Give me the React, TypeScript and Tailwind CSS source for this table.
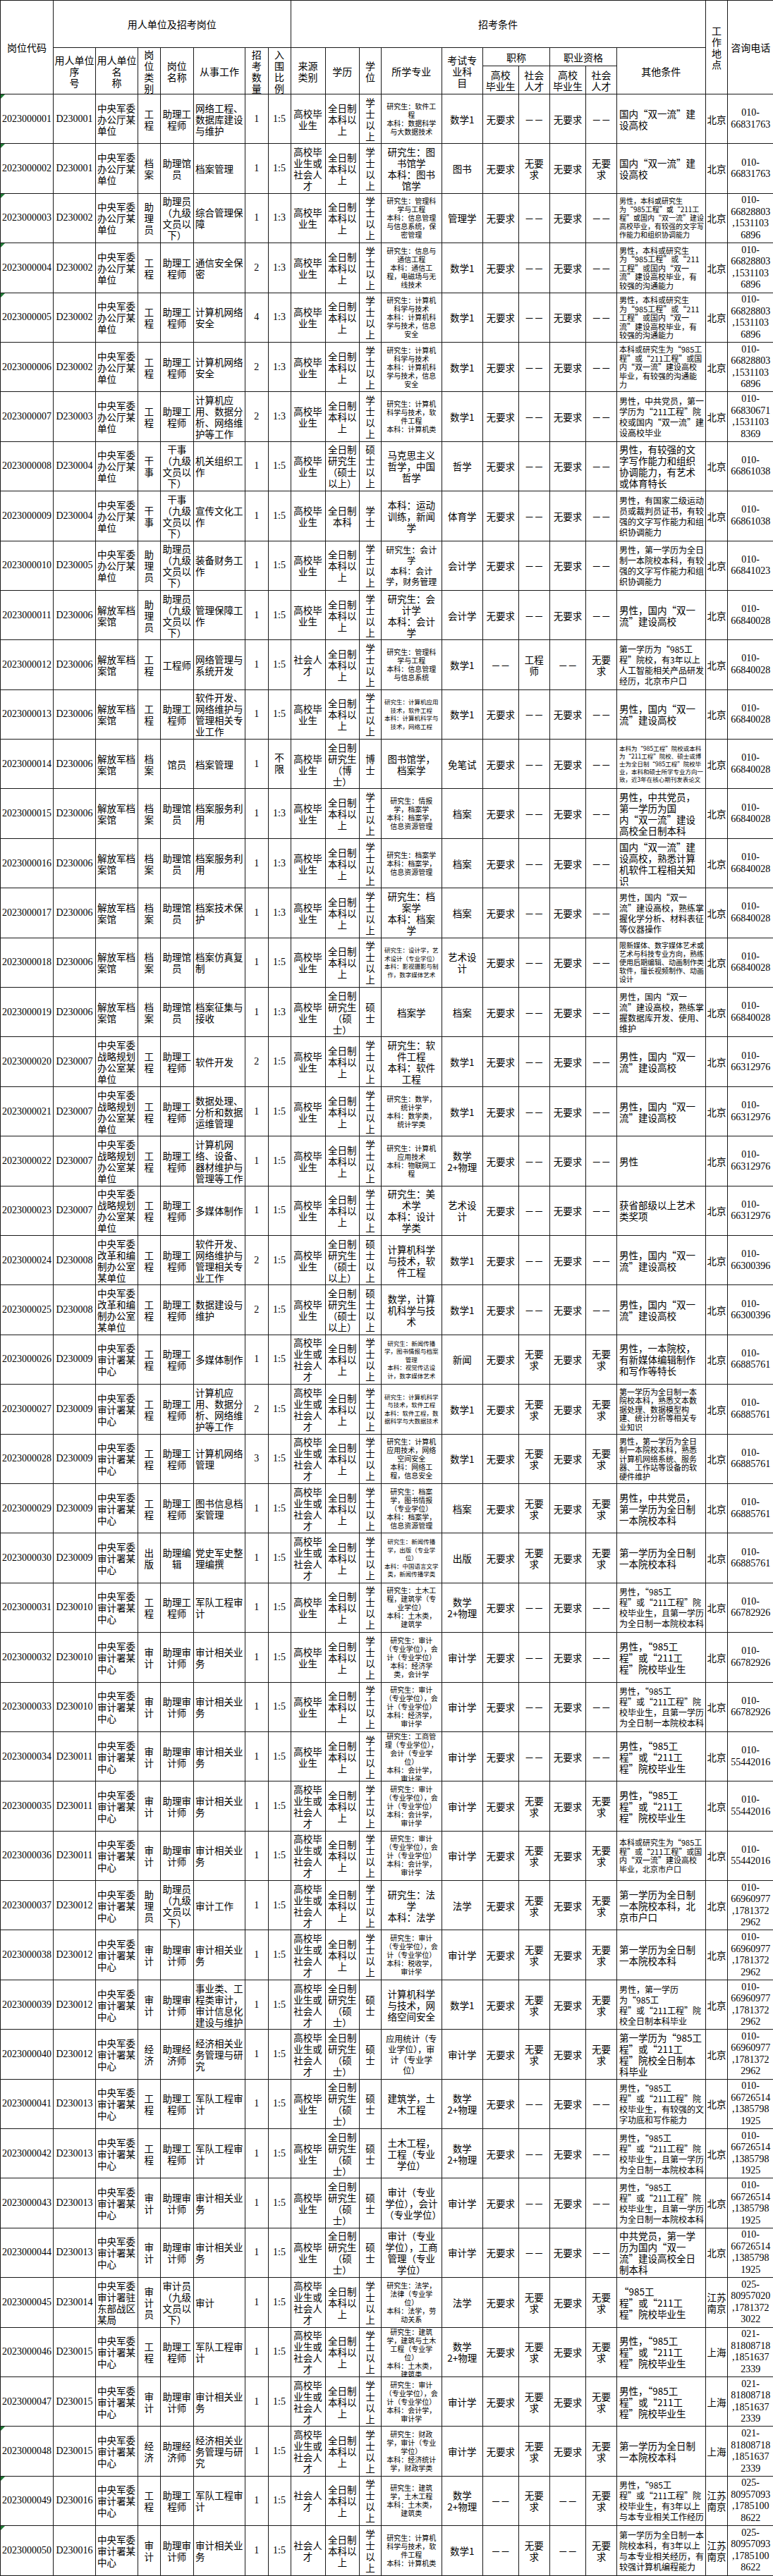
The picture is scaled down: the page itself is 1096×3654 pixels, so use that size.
import React from 'react';

type Size = 'L' | 'M' | 'S' | 'T' | 'X' | 'Z';

const sizeCls: Record<Size, string> = {
  L: 'text-[13.5px] leading-[16px]',
  M: 'text-[12px] leading-[15px]',
  S: 'text-[11px] leading-[12.5px]',
  T: 'text-[10px] leading-[12px]',
  X: 'text-[8.5px] leading-[11.5px]',
  Z: 'text-[8.5px] leading-[11px]',
};

const NUM = "font-['Liberation_Serif','Noto_Sans_CJK_SC',serif]";
const TD = 'border border-[#1a1a1a] p-0 align-middle';

// units
const U1 = '中央军委办公厅某单位';
const U2 = '解放军档案馆';
const U3 = '中央军委战略规划办公室某单位';
const U4 = '中央军委改革和编制办公室某单位';
const U5 = '中央军委审计署某中心';
const U6 = '中央军委审计署驻东部战区某局';

// phones
const P1 = '010-\n66831763';
const P2 = '010-\n66828803\n,1531103\n6896';
const P3 = '010-\n66830671\n,1531103\n8369';
const P4 = '010-\n66861038';
const P5 = '010-\n66841023';
const P6 = '010-\n66840028';
const P7 = '010-\n66312976';
const P8 = '010-\n66300396';
const P9 = '010-\n66885761';
const P10 = '010-\n66782926';
const P11 = '010-\n55442016';
const P12 = '010-\n66960977\n,1781372\n2962';
const P13 = '010-\n66726514\n,1385798\n1925';
const P14 = '025-\n80957020\n,1781372\n3022';
const P15 = '021-\n81808718\n,1851637\n2339';
const P16 = '025-\n80957093\n,1785100\n8622';

const G = '高校毕业生';
const GS = '高校毕业生或社会人才';
const SR = '社会人才';
const B = '全日制本科以上';
const Y = '全日制研究生（硕士以上）';
const YS = '全日制研究生（硕士）';
const XS = '学士以上';
const SS = '硕士以上';
const ENG = '助理工程师';
const AUD = '助理审计师';
const AUDW = '审计相关业务';
const ZLY = '助理员（九级文员以下）';

const D = '－－';
const N = '无要求';
const conds: Record<string, string[]> = {
  g: [N, D, N, D],
  gs: [N, N, N, N],
  sr: [D, N, D, N],
  e: [D, '工程师', D, N],
};

type Row = {
  seq: string;
  unit: string;
  type: string;
  post: string;
  work: string;
  num: string;
  ratio: string;
  source: string;
  edu: string;
  degree: string;
  major: string;
  ms: Size;
  exam: string;
  c: string;
  other: string;
  os: Size;
  place: string;
  phone: string;
  mark?: boolean;
};

function r(
  seq: string, unit: string, type: string, post: string, work: string, num: string, ratio: string,
  source: string, edu: string, degree: string, major: string, ms: Size, exam: string, c: string,
  other: string, os: Size, place: string, phone: string, mark = false,
): Row {
  return { seq, unit, type, post, work, num, ratio, source, edu, degree, major, ms, exam, c, other, os, place, phone, mark };
}

const AUD_MAJOR = '研究生：审计（专业学位），会计（专业学位）\n本科：会计学，审计学';
const M985 = '男性，“985工程”或“211工程”院校毕业生';
const M985B = '男性，“985工程”或“211工程”院校毕业生，且第一学历为全日制一本院校本科';
const SYL = '男性，国内“双一流”建设高校';

const rows: Row[] = [
  r('D230001', U1, '工程', ENG, '网络工程、数据库建设与维护', '1', '1:5', G, B, XS, '研究生：软件工程\n本科：数据科学与大数据技术', 'T', '数学1', 'g', '国内“双一流”建设高校', 'L', '北京', P1, true),
  r('D230001', U1, '档案', '助理馆员', '档案管理', '1', '1:5', GS, B, XS, '研究生：图书馆学\n本科：图书馆学', 'L', '图书', 'gs', '国内“双一流”建设高校', 'L', '北京', P1, true),
  r('D230002', U1, '助理员', ZLY, '综合管理保障', '1', '1:3', G, B, XS, '研究生：管理科学与工程\n本科：信息管理与信息系统，保密管理', 'T', '管理学', 'g', '男性，本科或研究生为“985工程”或“211工程”或国内“双一流”建设高校毕业，有较强的文字写作能力和组织协调能力', 'T', '北京', P2, true),
  r('D230002', U1, '工程', ENG, '通信安全保密', '2', '1:3', G, B, XS, '研究生：信息与通信工程\n本科：通信工程，电磁场与无线技术', 'T', '数学1', 'g', '男性，本科或研究生为“985工程”或“211工程”或国内“双一流”建设高校毕业，有较强的沟通能力', 'S', '北京', P2, true),
  r('D230002', U1, '工程', ENG, '计算机网络安全', '4', '1:3', G, B, XS, '研究生：计算机科学与技术\n本科：计算机科学与技术，信息安全', 'T', '数学1', 'g', '男性，本科或研究生为“985工程”或“211工程”或国内“双一流”建设高校毕业，有较强的沟通能力', 'S', '北京', P2, true),
  r('D230002', U1, '工程', ENG, '计算机网络安全', '2', '1:3', G, B, XS, '研究生：计算机科学与技术\n本科：计算机科学与技术，信息安全', 'T', '数学1', 'g', '本科或研究生为“985工程”或“211工程”或国内“双一流”建设高校毕业，有较强的沟通能力', 'S', '北京', P2),
  r('D230003', U1, '工程', ENG, '计算机应用、数据分析、网络维护等工作', '2', '1:3', G, B, XS, '研究生：计算机科学与技术，软件工程\n本科：计算机类', 'T', '数学1', 'g', '男性，中共党员，第一学历为“211工程”院校或国内“双一流”建设高校毕业', 'M', '北京', P3),
  r('D230004', U1, '干事', '干事（九级文员以下）', '机关组织工作', '1', '1:5', G, Y, SS, '马克思主义哲学，中国哲学', 'L', '哲学', 'g', '男性，有较强的文字写作能力和组织协调能力，有艺术或体育特长', 'L', '北京', P4),
  r('D230004', U1, '干事', '干事（九级文员以下）', '宣传文化工作', '1', '1:5', G, '全日制本科', '学士', '本科：运动训练，新闻学', 'L', '体育学', 'g', '男性，有国家二级运动员或裁判员证书，有较强的文字写作能力和组织协调能力', 'M', '北京', P4),
  r('D230005', U1, '助理员', ZLY, '装备财务工作', '1', '1:5', G, B, XS, '研究生：会计学\n本科：会计学，财务管理', 'M', '会计学', 'g', '男性，第一学历为全日制一本院校本科，有较强的文字写作能力和组织协调能力', 'M', '北京', P5),
  r('D230006', U2, '助理员', ZLY, '管理保障工作', '1', '1:5', G, B, XS, '研究生：会计学\n本科：会计学', 'L', '会计学', 'g', SYL, 'L', '北京', P6),
  r('D230006', U2, '工程', '工程师', '网络管理与系统开发', '1', '1:5', SR, B, XS, '研究生：管理科学与工程\n本科：信息管理与信息系统', 'T', '数学1', 'e', '第一学历为“985工程”院校，有3年以上人工智能相关产品研发经历，北京市户口', 'M', '北京', P6),
  r('D230006', U2, '工程', ENG, '软件开发、网络维护与管理相关专业工作', '1', '1:5', G, B, XS, '研究生：计算机应用技术，软件工程\n本科：计算机科学与技术，网络工程', 'X', '数学1', 'g', SYL, 'L', '北京', P6),
  r('D230006', U2, '档案', '馆员', '档案管理', '1', '不限', G, '全日制研究生（博士）', '博士', '图书馆学，档案学', 'L', '免笔试', 'g', '本科为“985工程”院校或本科为“211工程”院校、硕士或博士为全日制“985工程”院校毕业，本科和硕士所学专业方向一致，近3年在核心期刊发表论文', 'Z', '北京', P6),
  r('D230006', U2, '档案', '助理馆员', '档案服务利用', '1', '1:3', G, B, XS, '研究生：情报学，档案学\n本科：档案学，信息资源管理', 'T', '档案', 'g', '男性，中共党员，第一学历为国内“双一流”建设高校全日制本科', 'L', '北京', P6),
  r('D230006', U2, '档案', '助理馆员', '档案服务利用', '1', '1:3', G, B, XS, '研究生：档案学\n本科：档案学，信息资源管理', 'T', '档案', 'g', '国内“双一流”建设高校，熟悉计算机软件工程相关知识', 'L', '北京', P6),
  r('D230006', U2, '档案', '助理馆员', '档案技术保护', '1', '1:3', G, B, XS, '研究生：档案学\n本科：档案学', 'L', '档案', 'g', '男性，国内“双一流”建设高校，熟练掌握化学分析、材料表征等仪器操作', 'M', '北京', P6),
  r('D230006', U2, '档案', '助理馆员', '档案仿真复制', '1', '1:5', G, B, XS, '研究生：设计学，艺术设计（专业学位）\n本科：影视摄影与制作，数字媒体艺术', 'X', '艺术设计', 'g', '限新媒体、数字媒体艺术或艺术与科技专业方向，熟练使用后期编辑、动画制作类软件，擅长视频制作、动画设计', 'T', '北京', P6),
  r('D230006', U2, '档案', '助理馆员', '档案征集与接收', '1', '1:3', G, YS, '硕士', '档案学', 'L', '档案', 'g', '男性，国内“双一流”建设高校，熟练掌握数据库开发、使用、维护', 'M', '北京', P6),
  r('D230007', U3, '工程', ENG, '软件开发', '2', '1:5', G, B, XS, '研究生：软件工程\n本科：软件工程', 'L', '数学1', 'g', SYL, 'L', '北京', P7),
  r('D230007', U3, '工程', ENG, '数据处理、分析和数据运维管理', '1', '1:5', G, B, XS, '研究生：数学，统计学\n本科：数学类，统计学类', 'T', '数学1', 'g', SYL, 'L', '北京', P7),
  r('D230007', U3, '工程', ENG, '计算机网络、设备、器材维护与管理等工作', '1', '1:5', G, B, XS, '研究生：计算机应用技术\n本科：物联网工程', 'T', '数学2+物理', 'g', '男性', 'L', '北京', P7),
  r('D230007', U3, '工程', ENG, '多媒体制作', '1', '1:5', G, B, XS, '研究生：美术学\n本科：设计学类', 'L', '艺术设计', 'g', '获省部级以上艺术类奖项', 'L', '北京', P7),
  r('D230008', U4, '工程', ENG, '软件开发、网络维护与管理相关专业工作', '2', '1:5', G, Y, SS, '计算机科学与技术，软件工程', 'L', '数学1', 'g', SYL, 'L', '北京', P8),
  r('D230008', U4, '工程', ENG, '数据建设与维护', '2', '1:5', G, Y, SS, '数学，计算机科学与技术', 'L', '数学1', 'g', SYL, 'L', '北京', P8),
  r('D230009', U5, '工程', ENG, '多媒体制作', '1', '1:5', GS, B, XS, '研究生：新闻传播学，图书情报与档案管理\n本科：视觉传达设计，数字媒体艺术', 'X', '新闻', 'gs', '男性，一本院校，有新媒体编辑制作和写作等特长', 'L', '北京', P9),
  r('D230009', U5, '工程', ENG, '计算机应用、数据分析、网络维护等工作', '2', '1:5', GS, B, XS, '研究生：计算机科学与技术，软件工程\n本科：软件工程，数据科学与大数据技术', 'X', '数学1', 'gs', '第一学历为全日制一本院校本科，熟悉文本数据处理、数据模型构建、统计分析等相关专业知识', 'S', '北京', P9),
  r('D230009', U5, '工程', ENG, '计算机网络管理', '3', '1:5', GS, B, XS, '研究生：计算机应用技术，网络空间安全\n本科：网络工程，信息安全', 'T', '数学1', 'gs', '男性，第一学历为全日制一本院校本科，熟悉计算机网络系统、服务器、工作站等设备的软硬件维护', 'S', '北京', P9),
  r('D230009', U5, '工程', ENG, '图书信息档案管理', '1', '1:5', GS, B, XS, '研究生：档案学，图书情报（专业学位）\n本科：档案学，信息资源管理', 'T', '档案', 'gs', '男性，中共党员，第一学历为全日制一本院校本科', 'L', '北京', P9),
  r('D230009', U5, '出版', '助理编辑', '党史军史整理编撰', '1', '1:5', GS, B, XS, '研究生：新闻传播学，出版（专业学位）\n本科：中国语言文学类，新闻传播学类', 'X', '出版', 'gs', '第一学历为全日制一本院校本科', 'L', '北京', P9),
  r('D230010', U5, '工程', ENG, '军队工程审计', '1', '1:5', G, B, XS, '研究生：土木工程，建筑学（专业学位）\n本科：土木类，建筑学', 'T', '数学2+物理', 'g', M985B, 'M', '北京', P10),
  r('D230010', U5, '审计', AUD, AUDW, '1', '1:5', G, B, XS, '研究生：审计（专业学位），会计（专业学位）\n本科：经济学类，会计学', 'T', '审计学', 'g', M985, 'L', '北京', P10),
  r('D230010', U5, '审计', AUD, AUDW, '1', '1:5', G, B, XS, '研究生：审计（专业学位），会计（专业学位）\n本科：经济学，审计学', 'T', '审计学', 'g', M985B, 'M', '北京', P10),
  r('D230011', U5, '审计', AUD, AUDW, '1', '1:5', G, B, XS, '研究生：工商管理（专业学位），会计（专业学位）\n本科：会计学，审计学', 'T', '审计学', 'g', M985, 'L', '北京', P11),
  r('D230011', U5, '审计', AUD, AUDW, '1', '1:5', GS, B, XS, AUD_MAJOR, 'T', '审计学', 'gs', M985, 'L', '北京', P11),
  r('D230011', U5, '审计', AUD, AUDW, '1', '1:5', GS, B, XS, AUD_MAJOR, 'T', '审计学', 'gs', '本科或研究生为“985工程”或“211工程”或国内“双一流”建设高校毕业，北京市户口', 'S', '北京', P11),
  r('D230012', U5, '助理员', ZLY, '审计工作', '1', '1:5', GS, B, XS, '研究生：法学\n本科：法学', 'L', '法学', 'gs', '第一学历为全日制一本院校本科，北京市户口', 'L', '北京', P12),
  r('D230012', U5, '审计', AUD, AUDW, '1', '1:5', GS, B, XS, '研究生：审计（专业学位），会计（专业学位）\n本科：税收学，审计学', 'T', '审计学', 'gs', '第一学历为全日制一本院校本科', 'L', '北京', P12),
  r('D230012', U5, '审计', AUD, '事业类、工程类审计，审计信息化建设与维护', '1', '1:5', GS, YS, '硕士', '计算机科学与技术，网络空间安全', 'L', '数学1', 'gs', '男性，第一学历为“985工程”或“211工程”院校全日制本科毕业', 'M', '北京', P12),
  r('D230012', U5, '经济', '助理经济师', '经济相关业务管理与研究', '1', '1:5', GS, YS, '硕士', '应用统计（专业学位），审计（专业学位）', 'M', '审计学', 'gs', '第一学历为“985工程”或“211工程”院校全日制本科毕业', 'L', '北京', P12),
  r('D230013', U5, '工程', ENG, '军队工程审计', '1', '1:5', G, YS, '硕士', '建筑学，土木工程', 'L', '数学2+物理', 'g', '男性，“985工程”或“211工程”院校毕业生，有较强的文字功底和写作能力', 'M', '北京', P13),
  r('D230013', U5, '工程', ENG, '军队工程审计', '1', '1:5', G, YS, '硕士', '土木工程，工程（专业学位）', 'L', '数学2+物理', 'g', M985B, 'M', '北京', P13),
  r('D230013', U5, '审计', AUD, AUDW, '1', '1:5', G, YS, '硕士', '审计（专业学位），会计（专业学位）', 'L', '审计学', 'g', M985B, 'M', '北京', P13),
  r('D230013', U5, '审计', AUD, AUDW, '1', '1:5', G, YS, '硕士', '审计（专业学位），工商管理（专业学位）', 'L', '审计学', 'g', '中共党员，第一学历为国内“双一流”建设高校全日制本科', 'L', '北京', P13),
  r('D230014', U6, '审计员', '审计员（九级文员以下）', '审计', '1', '1:5', GS, B, XS, '研究生：法学，法律（专业学位）\n本科：法学，劳动关系', 'T', '法学', 'gs', '“985工程”或“211工程”院校毕业生', 'L', '江苏\n南京', P14),
  r('D230015', U5, '工程', ENG, '军队工程审计', '1', '1:5', GS, B, XS, '研究生：建筑学，建筑与土木工程（专业学位）\n本科：土木类，建筑类', 'T', '数学2+物理', 'gs', M985, 'L', '上海', P15),
  r('D230015', U5, '审计', AUD, AUDW, '1', '1:5', GS, B, XS, AUD_MAJOR, 'T', '审计学', 'gs', M985, 'L', '上海', P15),
  r('D230015', U5, '经济', '助理经济师', '经济相关业务管理与研究', '1', '1:5', GS, B, XS, '研究生：财政学，审计（专业学位）\n本科：经济统计学，财政学类', 'T', '审计学', 'gs', '第一学历为全日制一本院校本科', 'L', '上海', P15, true),
  r('D230016', U5, '工程', ENG, '军队工程审计', '1', '1:5', SR, B, XS, '研究生：建筑学，土木工程\n本科：土木类，建筑类', 'T', '数学2+物理', 'sr', '男性，“985工程”或“211工程”院校毕业生，有3年以上与本专业相关工作经历', 'M', '江苏\n南京', P16, true),
  r('D230016', U5, '审计', AUD, AUDW, '1', '1:5', SR, B, XS, '研究生：计算机科学与技术，软件工程\n本科：计算机类', 'T', '数学1', 'sr', '第一学历为全日制一本院校本科，有3年以上与本专业相关经历，有较强计算机编程能力', 'M', '江苏\n南京', P16, true),
];

function Box({ h, className = '', children }: { h: string; className?: string; children: React.ReactNode }) {
  return (
    <div className={`relative flex flex-col overflow-hidden ${h} ${className}`}>
      <div className="my-auto whitespace-pre-line">{children}</div>
    </div>
  );
}

const widths = [
  'w-[75px]', 'w-[60px]', 'w-[60px]', 'w-[31.5px]', 'w-[47.5px]', 'w-[73px]', 'w-[32.5px]', 'w-[32px]',
  'w-[49px]', 'w-[48.5px]', 'w-[31px]', 'w-[85.5px]', 'w-[58.5px]', 'w-[50.5px]', 'w-[44.5px]',
  'w-[51px]', 'w-[44px]', 'w-[125.5px]', 'w-[31.5px]', 'w-[65px]',
];

const RH = 'h-[69.4px]';
const L = sizeCls.L;

function DataRow({ row, i }: { row: Row; i: number }) {
  const code = `20230000${String(i + 1).padStart(2, '0')}`;
  const [t1, t2, q1, q2] = conds[row.c];
  const center = `text-center ${L}`;
  return (
    <tr>
      <td className={TD}>
        <Box h={RH} className={`text-center text-[14px] leading-[16px] whitespace-nowrap ${NUM}`}>
          {row.mark && (
            <span className="absolute left-0 top-0 h-0 w-0 border-t-[6px] border-r-[6px] border-t-[#1f7a35] border-r-transparent" />
          )}
          {code}
        </Box>
      </td>
      <td className={TD}>
        <Box h={RH} className={`text-center text-[14px] leading-[16px] ${NUM}`}>{row.seq}</Box>
      </td>
      <td className={TD}>
        <Box h={RH} className={`pl-[2px] text-left ${L}`}>{row.unit}</Box>
      </td>
      <td className={TD}>
        <Box h={RH} className={`px-[4px] ${center}`}>{row.type}</Box>
      </td>
      <td className={TD}>
        <Box h={RH} className={`px-[2px] ${center}`}>{row.post}</Box>
      </td>
      <td className={TD}>
        <Box h={RH} className={`pl-[2px] text-left ${L}`}>{row.work}</Box>
      </td>
      <td className={TD}>
        <Box h={RH} className={`px-[4px] text-center text-[14px] leading-[16px] ${NUM}`}>{row.num}</Box>
      </td>
      <td className={TD}>
        <Box h={RH} className={`px-[4px] text-center text-[14px] leading-[16px] ${NUM}`}>{row.ratio}</Box>
      </td>
      <td className={TD}>
        <Box h={RH} className={`px-[2px] ${center}`}>{row.source}</Box>
      </td>
      <td className={TD}>
        <Box h={RH} className={`px-[2px] ${center}`}>{row.edu}</Box>
      </td>
      <td className={TD}>
        <Box h={RH} className={`px-[4px] ${center}`}>{row.degree}</Box>
      </td>
      <td className={TD}>
        <Box h={RH} className={`px-[4px] text-center ${sizeCls[row.ms]}`}>{row.major}</Box>
      </td>
      <td className={TD}>
        <Box h={RH} className={`px-[3px] ${center}`}>{row.exam}</Box>
      </td>
      <td className={TD}>
        <Box h={RH} className={`px-[2px] ${center}`}>{t1}</Box>
      </td>
      <td className={TD}>
        <Box h={RH} className={`px-[2px] ${center}`}>{t2}</Box>
      </td>
      <td className={TD}>
        <Box h={RH} className={`px-[2px] ${center}`}>{q1}</Box>
      </td>
      <td className={TD}>
        <Box h={RH} className={`px-[2px] ${center}`}>{q2}</Box>
      </td>
      <td className={TD}>
        <Box h={RH} className={`pl-[3px] pr-[1px] text-left ${sizeCls[row.os]}`}>{row.other}</Box>
      </td>
      <td className={TD}>
        <Box h={RH} className={`text-center whitespace-pre ${L}`}>{row.place}</Box>
      </td>
      <td className={TD}>
        <Box h={RH} className={`text-center text-[14px] leading-[16.5px] ${NUM}`}>{row.phone}</Box>
      </td>
    </tr>
  );
}

function H({ children, h, rs, cs, className = '' }: { children: React.ReactNode; h: string; rs?: number; cs?: number; className?: string }) {
  return (
    <td rowSpan={rs} colSpan={cs} className={TD}>
      <Box h={h} className={`text-center text-[14px] leading-[16px] ${className}`}>{children}</Box>
    </td>
  );
}

export default function App() {
  return (
    <div className="min-h-screen bg-white text-black">
      <table className="w-[1096px] table-fixed border-collapse font-['Noto_Sans_CJK_SC','Liberation_Serif',sans-serif]">
        <colgroup>
          {widths.map((w, i) => (
            <col key={i} className={w} />
          ))}
        </colgroup>
        <tbody>
          <tr>
            <H h="h-[132px]" rs={3}>岗位代码</H>
            <H h="h-[66px]" cs={7}>用人单位及招考岗位</H>
            <H h="h-[66px]" cs={10}>招考条件</H>
            <H h="h-[132px]" rs={3}>{'工\n作\n地\n点'}</H>
            <H h="h-[132px]" rs={3}>咨询电话</H>
          </tr>
          <tr>
            <H h="h-[65px]" rs={2}>{'用人单位\n序\n号'}</H>
            <H h="h-[65px]" rs={2}>{'用人单位\n名\n称'}</H>
            <H h="h-[65px]" rs={2}>{'岗\n位\n类\n别'}</H>
            <H h="h-[65px]" rs={2}>{'岗位\n名称'}</H>
            <H h="h-[65px]" rs={2}>从事工作</H>
            <H h="h-[65px]" rs={2}>{'招\n考\n数\n量'}</H>
            <H h="h-[65px]" rs={2}>{'入\n围\n比\n例'}</H>
            <H h="h-[65px]" rs={2}>{'来源\n类别'}</H>
            <H h="h-[65px]" rs={2}>学历</H>
            <H h="h-[65px]" rs={2}>{'学\n位'}</H>
            <H h="h-[65px]" rs={2}>所学专业</H>
            <H h="h-[65px]" rs={2}>{'考试专\n业科\n目'}</H>
            <H h="h-[25px]" cs={2}>职称</H>
            <H h="h-[25px]" cs={2}>职业资格</H>
            <H h="h-[65px]" rs={2}>其他条件</H>
          </tr>
          <tr>
            <H h="h-[39px]">{'高校\n毕业生'}</H>
            <H h="h-[39px]">{'社会\n人才'}</H>
            <H h="h-[39px]">{'高校\n毕业生'}</H>
            <H h="h-[39px]">{'社会\n人才'}</H>
          </tr>
          {rows.map((row, i) => (
            <DataRow key={i} row={row} i={i} />
          ))}
        </tbody>
      </table>
    </div>
  );
}
